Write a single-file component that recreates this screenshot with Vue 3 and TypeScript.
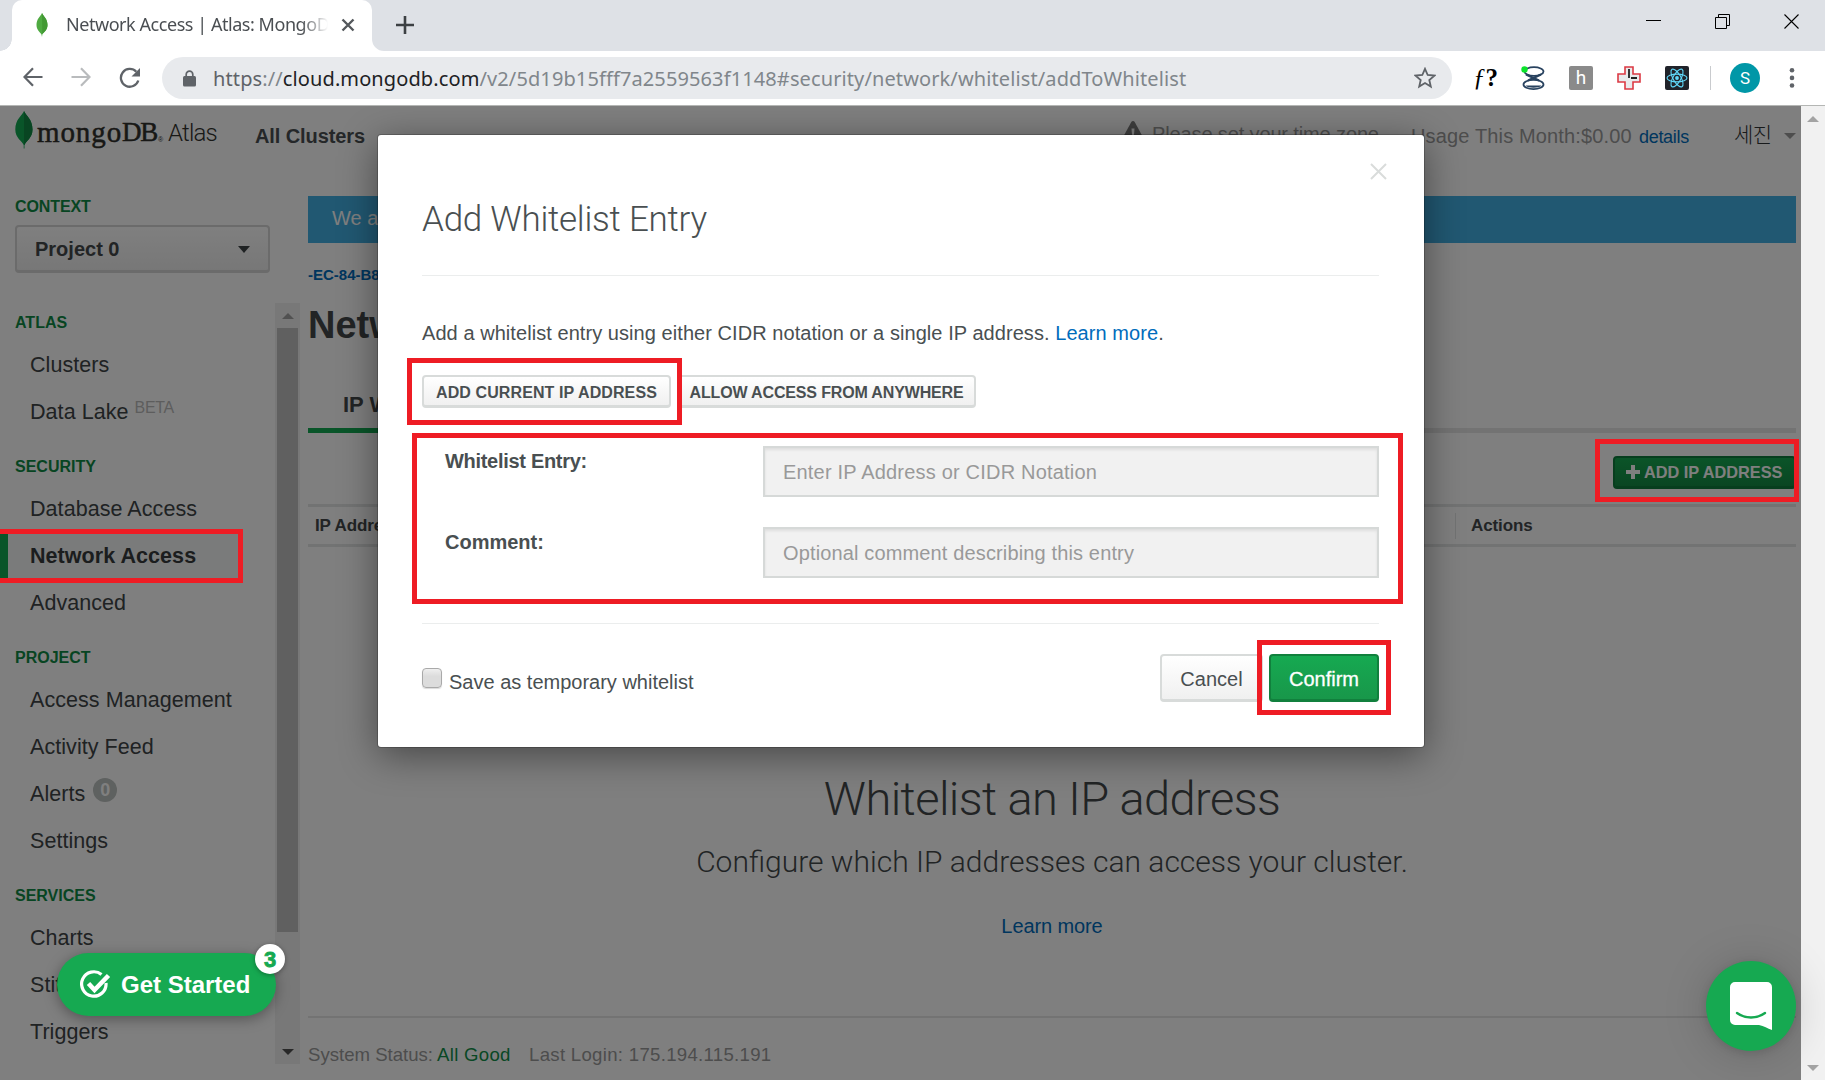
<script setup lang="ts">
interface NavItem { label: string; sup?: string; badge?: string; active?: boolean }
interface NavSection { title: string; items: NavItem[] }

const sections: NavSection[] = [
  { title: 'ATLAS', items: [{ label: 'Clusters' }, { label: 'Data Lake', sup: 'BETA' }] },
  { title: 'SECURITY', items: [{ label: 'Database Access' }, { label: 'Network Access', active: true }, { label: 'Advanced' }] },
  { title: 'PROJECT', items: [{ label: 'Access Management' }, { label: 'Activity Feed' }, { label: 'Alerts', badge: '0' }, { label: 'Settings' }] },
  { title: 'SERVICES', items: [{ label: 'Charts' }, { label: 'Stitch' }, { label: 'Triggers' }] },
]
</script>

<template>
  <div class="browser">
    <div class="tabstrip">
      <div class="tab">
        <svg class="favicon" width="12" height="24" viewBox="0 0 12 24"><path d="M6 0C8 4 11.5 6 11.5 12 11.5 17 8 19 6.3 21.500L6 24 5.500 21.500C4 19 .5 17 .5 12 .5 6 4 4 6 0z" fill="#4faa41" /><path d="M6 0C8 4 11.5 6 11.500 12 11.500 17 8 19 6.300 21z" fill="#439934" /></svg>
        <span class="tab-title">Network Access | Atlas: MongoDB</span>
        <svg class="tab-close" width="14" height="14" viewBox="0 0 14 14"><path d="M1.500 1.500l11 11M12.500 1.500l-11 11" stroke="#54585c" stroke-width="2.400" /></svg>
      </div>
      <svg class="foot" width="12" height="12" viewBox="0 0 12 12"><path d="M0 0v12h12A12 12 0 0 1 0 0z" fill="#fff" /></svg>
      <svg class="newtab" width="18" height="18" viewBox="0 0 18 18"><path d="M9 0v18M0 9h18" stroke="#3c4043" stroke-width="2.600" /></svg>
      <div class="window-buttons">
        <svg width="16" height="16" viewBox="0 0 16 16"><path d="M0 6.500h15" stroke="#000" /></svg>
        <svg width="16" height="16" viewBox="0 0 16 16"><path d="M.5 3.500h11v11H.5zM3.500 3.500v-3h11v11h-3" fill="none" stroke="#000" /></svg>
        <svg width="16" height="16" viewBox="0 0 16 16"><path d="M.5.5l14 14M14.500.5l-14 14" stroke="#000" stroke-width="1.100" /></svg>
      </div>
    </div>

    <div class="toolbar">
      <svg class="back" width="20" height="20" viewBox="0 0 20 20"><path d="M19.500 10H2M10 1.300L1.500 10l8.500 8.700" fill="none" stroke="#5f6368" stroke-width="2.200" /></svg>
      <svg class="forward" width="20" height="20" viewBox="0 0 20 20"><path d="M.5 10H18M10 1.300l8.500 8.700-8.500 8.700" fill="none" stroke="#b9bbbd" stroke-width="2.200" /></svg>
      <svg class="reload" width="22" height="22" viewBox="0 0 22 22"><path d="M19.300 13.500A8.900 8.900 0 1 1 17.300 4.700" fill="none" stroke="#5f6368" stroke-width="2.300" /><path d="M21 1v8.500h-8.500z" fill="#5f6368" /></svg>
      <div class="omnibox">
        <svg class="lock" width="13" height="17" viewBox="0 0 13 17"><path d="M3.200 7V4.500a3.300 3.300 0 0 1 6.600 0V7" fill="none" stroke="#5f6368" stroke-width="1.700" /><rect x="0" y="6" width="13" height="10.500" rx="1.500" fill="#5f6368" /></svg>
        <span class="url"><span class="scheme">https</span>://<span class="host">cloud.mongodb.com</span>/v2/5d19b15fff7a2559563f1148#security/network/whitelist/addToWhitelist</span>
        <svg class="star" width="22" height="22" viewBox="0 0 22 22"><path d="M11 1.800l2.700 6.200 6.700.6-5.100 4.400 1.500 6.600L11 16.100l-5.800 3.500 1.500-6.600L1.600 8.600l6.700-.6z" fill="none" stroke="#5f6368" stroke-width="1.800" /></svg>
      </div>
      <div class="extensions">
        <span class="fq"><i>ƒ</i>?</span>
        <svg width="24" height="24" viewBox="0 0 24 24"><g fill="none" stroke="#28425f" stroke-width="1.800"><ellipse cx="13" cy="5.500" rx="9.500" ry="4.300" fill="#fff" /><ellipse cx="12.500" cy="18.500" rx="10" ry="4.600" fill="#fff" /><path d="M5 8.500l13 6M20 8.500L7 14.500" stroke-width="2.200" /></g><path d="M4.500 19.500h16c-2 3-14 3-16 0z" fill="#28425f" /><circle cx="3.500" cy="3.500" r="3.200" fill="#0be32b" /></svg>
        <span class="hbox">h</span>
        <svg width="24" height="24" viewBox="0 0 24 24"><path d="M8 1h8v7h7v8h-7v7H8v-7H1V8h7z" fill="#e8eaec" stroke="#dc3a44" stroke-width="1.600" /><path d="M12 3v9M14 12h6" stroke="#222" stroke-width="1.800" fill="none" /></svg>
        <svg width="24" height="24" viewBox="0 0 24 24"><rect width="24" height="24" rx="2" fill="#20232a" /><g fill="none" stroke="#61dafb" stroke-width="1.100"><ellipse cx="12" cy="12" rx="10" ry="3.900" /><ellipse cx="12" cy="12" rx="10" ry="3.900" transform="rotate(60 12 12)" /><ellipse cx="12" cy="12" rx="10" ry="3.900" transform="rotate(120 12 12)" /></g><circle cx="12" cy="12" r="1.900" fill="#61dafb" /></svg>
      </div>
      <span class="divider"></span>
      <span class="avatar">S</span>
      <svg class="dots" width="6" height="22" viewBox="0 0 6 22"><g fill="#5f6368"><circle cx="3" cy="3.300" r="2.300" /><circle cx="3" cy="10.900" r="2.300" /><circle cx="3" cy="18.500" r="2.300" /></g></svg>
    </div>

    <div class="viewport">
      <div class="page">
        <header class="header">
          <svg class="leaf" width="18" height="38" viewBox="0 0 18 38"><path d="M9 0c2 5 8.500 8 8.500 18.500C17.500 27 11 30 9.500 34V37.500h-.8V34C7 30 .3 27 .3 18.500.3 8 7 5 9 0z" fill="#13aa52" /><path d="M9 0c2 5 8.500 8 8.500 18.500C17.500 27 11 30 9.500 34H9z" fill="#108a45" /></svg>
          <span class="mongo">mongo</span><span class="db">DB</span><span class="reg">®</span><span class="atlas">Atlas</span>
          <span class="all-clusters">All Clusters</span>
          <svg class="warn" width="22" height="20" viewBox="0 0 22 20"><path d="M11 0c.8 0 1.300.4 1.700 1l9 16.500c.6 1.200 0 2.500-1.400 2.500H1.700C.3 20-.3 18.700.3 17.500L9.300 1c.4-.6.9-1 1.700-1z" fill="#7b7b7b" /><path d="M9.500 7.500h3l-.5 6.500h-2z" fill="#fff" /></svg>
          <span class="timezone">Please set your time zone</span>
          <span class="usage">Usage This Month:$0.00</span>
          <a class="details">details</a>
          <span class="user">세진</span>
          <span class="caret user-caret"></span>
        </header>

        <div class="body">
          <aside class="sidebar">
            <div class="side-title">CONTEXT</div>
            <div class="project"><span>Project 0</span><span class="caret"></span></div>
            <div class="nav-wrap">
              <nav class="nav">
                <template v-for="s in sections" :key="s.title">
                  <div class="nav-title">{{ s.title }}</div>
                  <a v-for="i in s.items" :key="i.label" class="nav-item" :class="{ active: i.active }">
                    {{ i.label }}<span v-if="i.sup" class="beta">{{ i.sup }}</span><span v-if="i.badge" class="badge">{{ i.badge }}</span>
                  </a>
                </template>
              </nav>
              <div class="side-scroll"><span class="up"></span><span class="thumb"></span><span class="down"></span></div>
            </div>
          </aside>

          <main class="main">
            <div class="banner">We are</div>
            <div class="crumb">-EC-84-B8</div>
            <h1 class="h1">Network</h1>
            <div class="tabs"><span class="tab-item">IP Whitelist</span></div>
            <div class="actions">
              <button class="add-ip"><svg width="14" height="14" viewBox="0 0 14 14"><path d="M7 0v14M0 7h14" stroke="#fff" stroke-width="4" /></svg>ADD IP ADDRESS</button>
            </div>
            <div class="thead"><span class="th">IP Address</span><span class="th th-last">Actions</span></div>
            <div class="empty">
              <div class="empty-title">Whitelist an IP address</div>
              <div class="empty-sub">Configure which IP addresses can access your cluster.</div>
              <a class="empty-link">Learn more</a>
            </div>
            <footer class="footer"><span class="status">System Status:</span><span class="good">All Good</span><span class="login">Last Login: 175.194.115.191</span></footer>
          </main>
        </div>

        <div class="overlay">
          <section class="modal">
            <svg class="close" width="17" height="17" viewBox="0 0 17 17"><path d="M1 1l15 15M16 1L1 16" stroke="#d9dcdb" stroke-width="2" /></svg>
            <h2 class="modal-title">Add Whitelist Entry</h2>
            <hr class="hr" />
            <p class="lead">Add a whitelist entry using either CIDR notation or a single IP address. <a>Learn more</a>.</p>
            <div class="quick">
              <button class="btn small current">ADD CURRENT IP ADDRESS</button>
              <button class="btn small anywhere">ALLOW ACCESS FROM ANYWHERE</button>
            </div>
            <div class="fields">
              <div class="field"><label class="tight">Whitelist Entry:</label><input class="text" placeholder="Enter IP Address or CIDR Notation" /></div>
              <div class="field"><label>Comment:</label><input class="text second" placeholder="Optional comment describing this entry" /></div>
            </div>
            <hr class="hr" />
            <div class="modal-foot">
              <input type="checkbox" class="check" />
              <span class="check-label">Save as temporary whitelist</span>
              <button class="btn cancel">Cancel</button>
              <button class="btn confirm">Confirm</button>
            </div>
          </section>
        </div>
      </div>
      <div class="page-scroll"><span class="up"></span><span class="down"></span></div>
    </div>

    <div class="get-started">
      <svg width="31" height="29" viewBox="0 0 31 29"><path d="M21.500 4.500A12.200 12.200 0 1 0 26 13" fill="none" stroke="#fff" stroke-width="3.200" /><path d="M8.500 13.500l6 6.500L28.500 5.500" fill="none" stroke="#fff" stroke-width="4.600" /></svg>
      <span>Get Started</span>
      <b class="count">3</b>
    </div>
    <div class="chat">
      <svg width="42" height="48" viewBox="0 0 42 48"><path d="M5 0h32a5 5 0 0 1 5 5v43c-4.500-1.500-8-4-13-5H5a5 5 0 0 1-5-5V5a5 5 0 0 1 5-5z" fill="#fff" /><path d="M7 31c8 6 20 6 28 0" fill="none" stroke="#16a951" stroke-width="2.400" stroke-linecap="round" /></svg>
    </div>

    <div class="mark mark-nav"></div>
    <div class="mark mark-current"></div>
    <div class="mark mark-fields"></div>
    <div class="mark mark-confirm"></div>
    <div class="mark mark-add"></div>
  </div>
</template>

<style>
body { margin: 0; }
</style>

<style scoped>
* { box-sizing: border-box; }
.browser { position: relative; width: 1825px; height: 1080px; overflow: hidden; display: flex; flex-direction: column; font-family: "Liberation Sans", Arial, sans-serif; white-space: nowrap; background: #fff; }
svg { display: block; flex: none; }
button { font-family: inherit; margin: 0; }

.tabstrip { height: 51px; background: #dee1e6; display: flex; flex: none; }
.tab { width: 360px; margin-left: 12px; background: #fff; border-radius: 10px 10px 0 0; display: flex; align-items: flex-start; }
.tabstrip::before { content: ""; position: absolute; width: 12px; height: 12px; top: 39px; background: radial-gradient(circle at 0 0, #dee1e6 11.500px, #fff 12px); }
.foot { align-self: flex-end; }
.favicon { margin: 13px 0 0 24px; }
.tab-title { width: 262px; margin-left: 18px; margin-top: 11px; overflow: hidden; font: 18px/27px "Noto Sans", sans-serif; letter-spacing: -.45px; color: #4a4e52; -webkit-mask-image: linear-gradient(90deg, #000 235px, transparent 262px); mask-image: linear-gradient(90deg, #000 235px, transparent 262px); }
.tab-close { margin: 18px 0 0 13px; }
.newtab { margin: 16px 0 0 12px; }
.window-buttons { margin: 14px 25px 0 auto; display: flex; gap: 53px; }

.toolbar { height: 55px; flex: none; border-bottom: 1px solid #b4b6b4; display: flex; align-items: flex-start; }
.back { margin: 16px 0 0 23px; }
.forward { margin: 16px 0 0 28px; }
.reload { margin: 16px 0 0 28px; }
.omnibox { margin: 6px 0 0 21px; width: 1290px; height: 42px; border-radius: 21px; background: #e8eaed; display: flex; align-items: center; }
.lock { margin-left: 21px; }
.url { margin: 2px 0 0 17px; font: 20px/30px "Noto Sans", sans-serif; color: #80868b; letter-spacing: .11px; }
.scheme { color: #5f6368; }
.host { color: #202124; }
.star { margin: 0 16px 0 auto; }
.extensions { display: flex; gap: 24px; margin: 15px 0 0 21px; align-items: center; height: 24px; }
.fq { width: 24px; font: bold 25px/24px "Liberation Serif", serif; color: #000; }
.fq i { font-weight: normal; }
.hbox { width: 24px; height: 24px; border-radius: 2px; background: #8a8a8a; color: #fff; font: 19px/24px Roboto, sans-serif; text-align: center; }
.divider { width: 1px; height: 24px; background: #c9cbce; margin: 15px 0 0 21px; }
.avatar { width: 30px; height: 30px; margin: 12px 0 0 19px; border-radius: 50%; background: #0097a7; color: #fff; font: 17px/30px Roboto, sans-serif; text-align: center; }
.dots { margin: 16px 0 0 29px; }

.viewport { flex: 1; display: flex; min-height: 0; }
.page { position: relative; width: 1801px; background: #fff; display: flex; flex-direction: column; overflow: hidden; }
.page-scroll { width: 24px; background: #f1f1f1; display: flex; flex-direction: column; justify-content: space-between; align-items: center; padding: 10px 0 9px; }
.up { width: 0; height: 0; border: 6px solid transparent; border-top: 0; border-bottom-color: #a3a3a3; }
.down { width: 0; height: 0; border: 6px solid transparent; border-bottom: 0; border-top-color: #a3a3a3; }

.header { height: 90px; flex: none; display: flex; align-items: flex-start; color: #4a4f52; }
.leaf { margin: 5px 0 0 15px; }
.mongo, .db { font: 29px/40px "Liberation Serif", serif; color: #30302c; margin-top: 6px; -webkit-text-stroke: .5px #30302c; }
.mongo { margin-left: 4px; width: 85px; letter-spacing: .9px; }
.db { font-size: 27px; letter-spacing: -1.300px; width: 36px; }
.reg { font-size: 7px; line-height: 10px; width: 10px; margin-top: 29px; color: #30302c; }
.atlas { font: 300 24px/40px Roboto, sans-serif; margin-top: 7px; width: 52px; letter-spacing: -.8px; color: #33332f; }
.all-clusters { font-weight: bold; font-size: 20px; line-height: 40px; margin: 10px 0 0 35px; width: 112px; letter-spacing: -.1px; }
.warn { margin: 15px 0 0 755px; }
.timezone { font-size: 20px; line-height: 40px; margin: 8px 0 0 8px; width: 259px; letter-spacing: -.13px; color: #9a9a9a; }
.usage { font-size: 20px; line-height: 40px; margin-top: 10px; width: 228px; letter-spacing: .15px; color: #9a9a9a; }
.details { font-size: 18px; line-height: 40px; margin-top: 11px; width: 95px; letter-spacing: -.3px; color: #006cbc; }
.user { font: 21px/30px "Noto Sans CJK KR", sans-serif; font-weight: 300; margin-top: 12px; width: 50px; letter-spacing: -.5px; color: #303436; }
.caret { width: 0; height: 0; border: 6px solid transparent; border-bottom: 0; border-top: 7px solid #3f4547; }
.user-caret { margin-top: 27px; border-top: 6px solid #9a9a9a; }

.body { flex: 1; display: flex; min-height: 0; }
.sidebar { width: 300px; padding-top: 2px; }
.side-title { margin-left: 15px; height: 18px; line-height: 18px; font-size: 16px; font-weight: bold; letter-spacing: -.1px; color: #0f8a45; }
.project { margin: 9px 0 30px 15px; width: 255px; height: 48px; border: 2px solid #d6d6d6; border-bottom-width: 3px; border-radius: 4px; background: linear-gradient(#fff, #efefef); display: flex; justify-content: space-between; align-items: center; padding: 2px 18px 0 18px; font-size: 20px; font-weight: bold; color: #44494b; }
.nav-wrap { display: flex; height: 761px; }
.nav { width: 275px; }
.nav-title { height: 50px; padding: 21.500px 0 0 15px; font-size: 16px; font-weight: bold; line-height: 20px; color: #0f8a45; }
.nav-title:first-child { height: 38px; padding-top: 9.500px; }
.nav-item { display: flex; height: 47px; line-height: 49px; padding-left: 30px; font-size: 21.500px; letter-spacing: .06px; color: #404547; }
.nav-item.active { width: 243px; font-weight: bold; border-left: 8px solid #13aa52; padding-left: 22px; background: #f5f7f6; color: #373b3c; }
.beta { font-size: 16px; line-height: 40px; margin-left: 6px; color: #bbb; letter-spacing: -.3px; }
.badge { width: 24px; height: 24px; border-radius: 50%; margin: 8px 0 0 8px; background: #bdc2c0; color: #fff; font-size: 18px; font-weight: bold; line-height: 24px; text-align: center; }
.side-scroll { width: 25px; background: #f1f1f1; display: flex; flex-direction: column; align-items: center; padding: 10px 0 9px; }
.side-scroll .thumb { width: 21px; height: 604px; margin-top: 9px; background: #c1c1c1; }
.side-scroll .down { margin-top: auto; border-top-color: #505050; }

.main { width: 1501px; padding: 0 5px 0 8px; color: #44494b; }
.banner { height: 47px; background: #43b1e5; color: #fff; font-size: 20px; line-height: 45px; padding-left: 24px; }
.crumb { margin-top: 22px; font-size: 15px; line-height: 20px; font-weight: bold; color: #006cbc; }
.h1 { margin: 18px 0 0; font-size: 38px; line-height: 44px; }
.tabs { height: 86px; padding-top: 43px; border-bottom: 5px solid #e6e6e6; }
.tab-item { display: inline-block; height: 43px; padding: 0 35px; font-size: 22px; line-height: 30px; font-weight: bold; border-bottom: 5px solid #13aa52; }
.actions { height: 71px; padding-top: 23px; display: flex; justify-content: flex-end; align-items: flex-start; }
.add-ip { width: 183px; height: 33px; border: 2px solid #0f7d3c; border-bottom-width: 3px; border-radius: 4px; background: linear-gradient(#16a951, #148c45); color: #fff; font-size: 16.300px; font-weight: bold; display: flex; align-items: center; gap: 4px; padding: 0 0 0 11px; }
.thead { height: 43px; border: solid #e4e6e6; border-width: 3px 0; display: flex; align-items: center; font-size: 17px; font-weight: bold; letter-spacing: -.1px; padding-left: 7px; }
.th { width: 1140px; line-height: 38px; }
.th-last { border-left: 1px solid #e4e6e6; line-height: 26px; padding-left: 15px; width: auto; }
.empty { height: 469px; display: flex; flex-direction: column; align-items: center; padding-top: 224px; }
.empty-title { font: 300 47px/56px Roboto, sans-serif; letter-spacing: -.58px; }
.empty-sub { margin-top: 15px; font: 300 30px/40px Roboto, sans-serif; letter-spacing: 0; }
.empty-link { margin-top: 31px; font-size: 20px; line-height: 26px; letter-spacing: -.1px; color: #006cbc; }
.footer { border-top: 2px solid #e6e6e6; padding-top: 22px; display: flex; font-size: 18.600px; line-height: 30px; color: #9a9a9a; }
.status { width: 129px; }
.good { width: 92px; color: #13904a; letter-spacing: .3px; }
.login { letter-spacing: .3px; }

.overlay { position: absolute; inset: 0; background: rgba(0, 0, 0, .5); display: flex; align-items: flex-start; }
.modal { position: relative; width: 1046px; height: 612px; margin: 29px 0 0 378px; padding: 63px 45px 0 44px; background: #fff; border-radius: 3px; box-shadow: 0 0 0 1px rgba(0, 0, 0, .2), 0 8px 38px rgba(0, 0, 0, .45); color: #494f51; }
.close { position: absolute; right: 37px; top: 28px; }
.modal-title { margin: 0; font: 300 35px/44px Roboto, sans-serif; letter-spacing: -.25px; }
.hr { height: 1px; border: 0; margin: 33px 0 0; background: #ebeded; }
.lead { margin: 43px 0 0; font-size: 20px; line-height: 28px; letter-spacing: .06px; }
.lead a { color: #006cbc; }
.quick { margin-top: 28px; display: flex; gap: 6px; }
.btn { padding: 0; text-align: center; border: 2px solid #d8dbda; border-bottom-width: 3px; border-radius: 4px; background: linear-gradient(#fff, #f0f0f0); color: #494f51; }
.small { height: 33px; padding-top: 3px; font-size: 16px; font-weight: bold; letter-spacing: .1px; }
.current { width: 249px; }
.anywhere { width: 299px; letter-spacing: -.15px; }
.fields { margin-top: 38px; display: flex; flex-direction: column; gap: 30px; }
.field { display: flex; height: 51px; }
.field label { width: 341px; padding: 0 0 0 23px; font-size: 20px; line-height: 30px; font-weight: bold; }
.field .tight { letter-spacing: -.3px; }
.text { width: 616px; height: 51px; border: 2px solid #d6d9d8; border-radius: 0; background: #f1f1f1; box-shadow: inset 0 2px 3px rgba(0, 0, 0, .08); padding: 2px 0 0 18px; font: 20px "Liberation Sans", Arial, sans-serif; letter-spacing: .2px; }
.text.second { letter-spacing: .14px; }
.text::placeholder { color: #999; opacity: 1; }
.fields + .hr { margin-top: 45px; }
.modal-foot { margin-top: 30px; height: 48px; display: flex; align-items: flex-start; }
.check { appearance: none; margin: 14px 0 0; width: 20px; height: 20px; border: 1.500px solid #a9a9a9; border-radius: 4px; background: linear-gradient(#efefef, #dcdcdc 40%); box-shadow: 0 1px 1px rgba(0, 0, 0, .15); }
.check-label { margin: 14px 0 0 7px; font-size: 20px; line-height: 28px; }
.cancel { margin-left: auto; width: 103px; height: 48px; padding-top: 4px; font-size: 20px; }
.confirm { margin-left: 6px; width: 110px; height: 48px; padding-top: 4px; font-size: 20px; color: #fff; background: linear-gradient(#16a951, #18974a); border-color: #11803d; -webkit-text-stroke: .3px #fff; }

.get-started { position: absolute; left: 57px; top: 953px; width: 219px; height: 63px; border-radius: 32px; background: #16a951; box-shadow: 0 3px 14px rgba(0, 0, 0, .35); color: #fff; font-size: 24px; font-weight: bold; display: flex; align-items: center; padding-left: 23px; gap: 10px; letter-spacing: 0; }
.count { position: absolute; right: -9px; top: -9px; width: 30px; height: 30px; border-radius: 50%; background: #fff; color: #16a951; text-align: center; font-size: 22px; line-height: 31px; -webkit-text-stroke: .8px #16a951; box-shadow: 0 1px 5px rgba(0, 0, 0, .35); }
.chat { position: absolute; left: 1706px; top: 961px; width: 90px; height: 90px; border-radius: 50%; background: #16a951; box-shadow: 0 2px 9px rgba(0, 0, 0, .12), 0 3px 45px rgba(0, 0, 0, .18); display: flex; justify-content: center; align-items: center; }

.mark { position: absolute; border: 5px solid #ee1c24; }
.mark-nav { left: -6px; top: 529px; width: 249px; height: 54px; }
.mark-current { left: 407px; top: 358px; width: 275px; height: 67px; }
.mark-fields { left: 412px; top: 433px; width: 991px; height: 171px; }
.mark-confirm { left: 1257px; top: 640px; width: 134px; height: 75px; }
.mark-add { left: 1595px; top: 439px; width: 204px; height: 63px; }
</style>
